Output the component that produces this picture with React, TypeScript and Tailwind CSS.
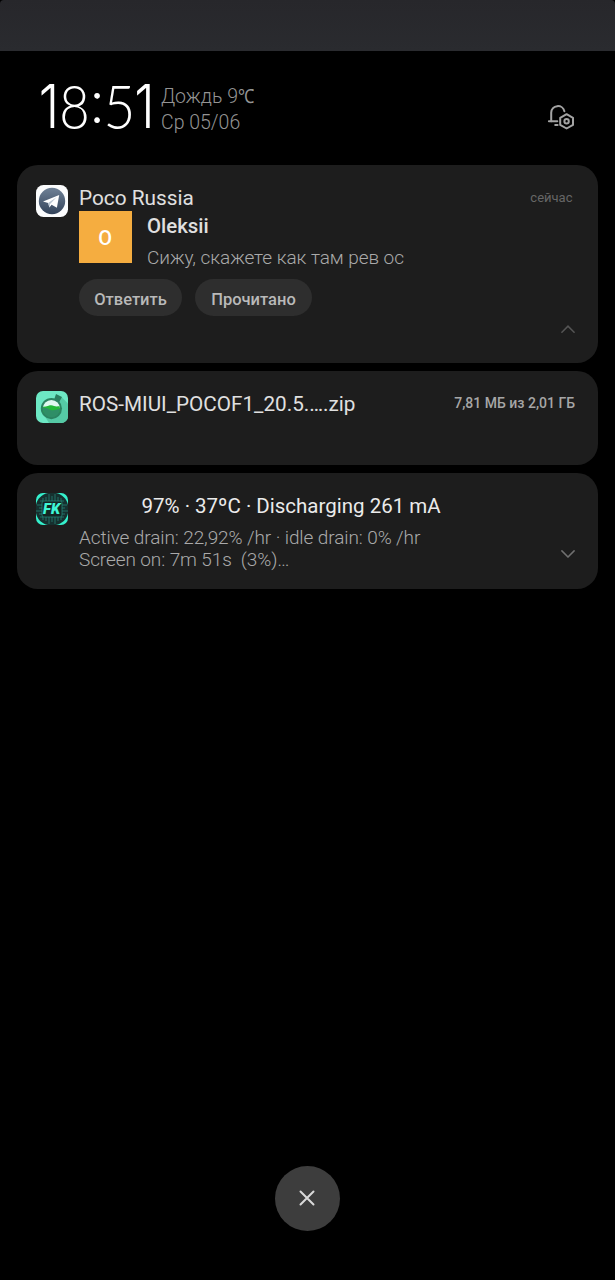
import type { ReactNode } from "react";

function BellSettingsIcon() {
  return (
    <svg
      width="30"
      height="28"
      viewBox="0 0 30 28"
      fill="none"
      stroke="#a3a3a3"
      strokeWidth="2"
      strokeLinecap="round"
      strokeLinejoin="round"
    >
      <path d="M4.2 18.2V9.6a6.7 6.7 0 0 1 13.2-1.4" />
      <path d="M1.9 18.3h8.4M8.2 21.9h2.4" />
      <path d="M19.6 11.2l6.4 3.6v7.1l-6.4 3.6-6.4-3.6v-7.1z" />
      <circle cx="19.6" cy="18.3" r="2.2" />
    </svg>
  );
}

function TelegramIcon() {
  return (
    <svg width="32" height="32" viewBox="0 0 32 32">
      <defs>
        <linearGradient id="tg" x1="0" y1="0" x2="0" y2="1">
          <stop offset="0" stopColor="#6f8196" />
          <stop offset="1" stopColor="#33435a" />
        </linearGradient>
      </defs>
      <rect width="32" height="32" rx="7.5" fill="#fbfcfd" />
      <circle cx="16" cy="16" r="13.2" fill="url(#tg)" />
      <path d="M7 16.6L23.2 9.9L20.9 22.8L15.6 19.8L13.4 22.5L12.2 18z" fill="#fff" />
      <path d="M12.2 18L20.8 12L14.1 18.9L13.4 22.5z" fill="#b8c4d1" />
    </svg>
  );
}

function FlaskIcon() {
  return (
    <svg width="32" height="32" viewBox="0 0 32 32">
      <defs>
        <clipPath id="flask-tile">
          <rect width="32" height="32" rx="7" />
        </clipPath>
        <clipPath id="flask-glass">
          <circle cx="15.4" cy="17.6" r="8.6" />
        </clipPath>
      </defs>
      <g clipPath="url(#flask-tile)">
        <rect width="32" height="32" fill="#6de8c4" />
        <path d="M25.5 6L32 12.5V32H13L8 24z" fill="#55c9a5" />
        <path d="M20 3L26 6L23.2 11L18 9z" fill="#2b7f60" />
        <circle cx="15.4" cy="17.6" r="10.6" fill="#2b8361" />
        <g clipPath="url(#flask-glass)">
          <path d="M5 7h22v10H5z" fill="#dff8ef" />
          <path d="M5 15.6c3 .4 5 0 7.500-.8 2.500-.9 4-.4 5.500.2 2 .8 4 .2 9 .2V22H5z" fill="#22b938" />
          <path d="M5 16.6c4 0 6 .6 8.500 1.800 2.500 1.200 5 1.300 7.500.2 2-.8 4-1.200 6-1.200V27H5z" fill="#2f8e67" />
        </g>
      </g>
    </svg>
  );
}

function KernelIcon() {
  return (
    <svg width="32" height="32" viewBox="0 0 32 32">
      <defs>
        <clipPath id="fk-tile">
          <rect width="32" height="32" rx="7" />
        </clipPath>
      </defs>
      <g clipPath="url(#fk-tile)">
        <rect width="32" height="32" fill="#16302f" />
        <path
          d="M0 12C1 6 6 1 12 0H0zM32 12C31 6 26 1 20 0h12zM0 20c1 6 6 11 12 12H0zM32 20c-1 6-6 11-12 12h12z"
          fill="#35f0cc"
        />
        <g stroke="#278e7e" strokeWidth=".7" fill="none">
          <path d="M10 4v4M13 1v7M16 3v5M19 1v7M22 4v4M10 24v4M13 24v7M16 24v5M19 24v7M22 24v4" />
          <path d="M1 12h5M3 15h3M0 18h6M3 21h3M26 12h5M26 15h3M26 18h6M26 21h3M7 5v3H4M25 5v3h3M7 27v-3H4M25 27v-3h3" />
          <rect x="6" y="8" width="20" height="16" rx="2" fill="#142524" />
        </g>
        <text
          x="15.6"
          y="21"
          textAnchor="middle"
          textLength="17"
          lengthAdjust="spacingAndGlyphs"
          fill="#3ff5d5"
          fontFamily="Roboto, sans-serif"
          fontSize="14"
          fontStyle="italic"
          fontWeight="900"
        >
          FK
        </text>
      </g>
    </svg>
  );
}

function Chevron({ up = false }: { up?: boolean }) {
  return (
    <svg width="14" height="8" viewBox="0 0 14 8" fill="none" strokeWidth="1.5" strokeLinecap="round">
      {up ? (
        <path d="M.9 7.200L7 1.100l6.100 6.100" stroke="#555" />
      ) : (
        <path d="M.9.9L7 7L13.1.9" stroke="#707070" />
      )}
    </svg>
  );
}

function Notification({
  icon,
  className,
  children,
}: {
  icon: ReactNode;
  className: string;
  children: ReactNode;
}) {
  return (
    <article className={`flex rounded-[21px] bg-[#1d1d1d] pl-[19px] ${className}`}>
      <div className="mt-5 w-[43px] shrink-0">{icon}</div>
      <div className="flex min-w-0 flex-1 flex-col">{children}</div>
    </article>
  );
}

function Digit({ className, children }: { className: string; children: ReactNode }) {
  return (
    <span className={`flex justify-center ${className}`}>
      <span className="inline-block">{children}</span>
    </span>
  );
}

function Clock() {
  return (
    <time className="flex h-[62px] font-[Lato,sans-serif] text-[61px] leading-[62px] font-light text-white">
      <Digit className="w-[22px] scale-x-[.85] font-[Inter,sans-serif] font-light">1</Digit>
      <Digit className="w-[29px] scale-x-[.86]">8</Digit>
      <Digit className="w-[16px] -translate-y-[6px]">:</Digit>
      <Digit className="w-[29px] scale-x-[.9]">5</Digit>
      <Digit className="w-[21px] scale-x-[.85] font-[Inter,sans-serif] font-light">1</Digit>
    </time>
  );
}

export default function App() {
  return (
    <div className="flex h-[1280px] w-[615px] flex-col overflow-hidden bg-black font-[Roboto,sans-serif] whitespace-nowrap">
      <div className="h-[51px] rounded-t-[4px] bg-linear-to-b from-[#27272b] to-[#2a2b2f]" />

      <header className="flex h-[114px] px-[38px]">
        <div className="w-[123px] pt-[24px]">
          <Clock />
        </div>
        <div className="pt-[32.5px] text-[19.5px] leading-[26px] font-light text-[#949494]">
          <p>
            Дождь 9<span className="inline-block origin-left scale-x-[.84]">℃</span>
          </p>
          <p>Ср 05/06</p>
        </div>
        <div className="mt-[52px] ml-auto">
          <BellSettingsIcon />
        </div>
      </header>

      <main className="flex flex-col gap-[8.5px] pr-[17px] pl-[17px]">
        <Notification icon={<TelegramIcon />} className="h-[197.5px]">
          <div className="flex h-[46px] justify-between pt-5 pr-[25.5px]">
            <h2 className="text-[20.8px] leading-[26px] text-[#e0e0e0]">Poco Russia</h2>
            <span className="text-[13px] leading-[25px] text-[#666]">сейчас</span>
          </div>
          <div className="flex h-[62px]">
            <div className="flex h-[52px] w-[52.5px] items-center justify-center bg-[#f5ad40] pt-[2px] text-[20px] font-medium text-white">
              O
            </div>
            <div className="ml-[15.5px]">
              <h3 className="text-[20.4px] leading-[30px] font-medium text-[#e0e0e0]">Oleksii</h3>
              <p className="text-[19px] leading-[34px] font-light tracking-[-.07px] text-[#aaa]">
                Сижу, скажете как там рев ос
              </p>
            </div>
          </div>
          <div className="mt-[6px] flex gap-[13px] text-[16.5px] font-medium text-[#b9b9b9]">
            <button className="h-[37px] w-[103px] rounded-full bg-[#2e2e2e] pt-[5px]">Ответить</button>
            <button className="h-[37px] w-[117px] rounded-full bg-[#2e2e2e] pt-[5px]">Прочитано</button>
          </div>
          <div className="mt-[9px] mr-[23px] self-end">
            <Chevron up />
          </div>
        </Notification>

        <Notification icon={<FlaskIcon />} className="h-[93.5px]">
          <div className="flex justify-between pt-5 pr-[23px]">
            <h2 className="text-[20.7px] leading-[26px] text-[#e0e0e0]">ROS-MIUI_POCOF1_20.5.….zip</h2>
            <span className="text-[14px] leading-[25px] font-medium text-[#a6a6a6]">
              7,81 МБ из 2,01 ГБ
            </span>
          </div>
        </Notification>

        <Notification icon={<KernelIcon />} className="h-[115.5px]">
          <h2 className="pt-5 pl-[62.5px] text-[20.5px] leading-[26px] text-[#ebebeb]">
            97% · 37ºC · Discharging 261 mA
          </h2>
          <div className="flex items-end justify-between pt-[8px] pr-[23px]">
            <p className="text-[19px] leading-[22px] font-light tracking-[-.1px] whitespace-pre text-[#aaa]">
              {"Active drain: 22,92% /hr · idle drain: 0% /hr\nScreen on: 7m 51s  (3%)…"}
            </p>
            <div className="mb-[13px]">
              <Chevron />
            </div>
          </div>
        </Notification>
      </main>

      <footer className="mt-auto mb-[49px] flex justify-center">
        <button
          aria-label="Close"
          className="flex size-[65px] items-center justify-center rounded-full bg-[#3d3d3d] pr-px pb-px"
        >
          <svg width="16" height="16" viewBox="0 0 16 16" stroke="#d9d9d9" strokeWidth="2" strokeLinecap="round">
            <path d="M1.500 1.500l13 13M14.500 1.500l-13 13" />
          </svg>
        </button>
      </footer>
    </div>
  );
}
